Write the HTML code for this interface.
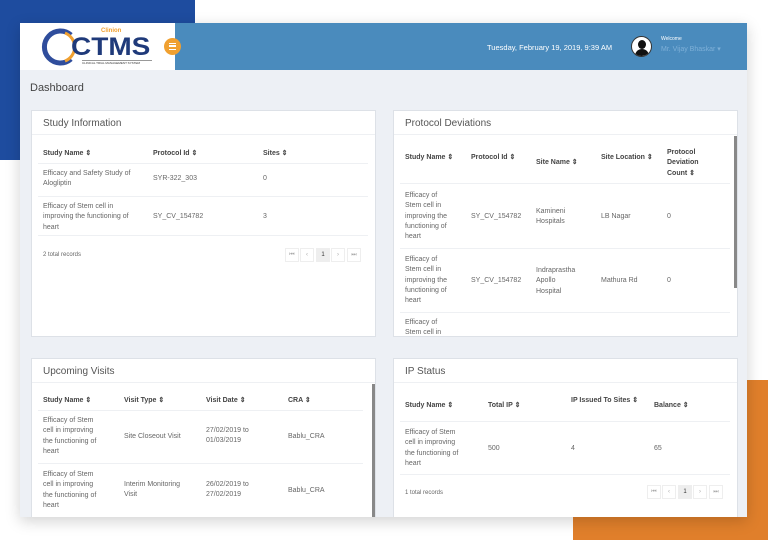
<!DOCTYPE html>
<html><head><meta charset="utf-8"><style>
*{margin:0;padding:0;box-sizing:border-box}
body{width:768px;height:540px;overflow:hidden;background:#fff;position:relative;font-family:"Liberation Sans",sans-serif;color:#555}
.abs{position:absolute}
.app{position:absolute;left:20px;top:23px;width:727px;height:494px;background:#edf0f5;box-shadow:0 4px 14px rgba(0,0,0,.18);overflow:hidden}
.panel{position:absolute;background:#fff;border:1px solid #dde1e7;overflow:hidden}
.ptitle{position:absolute;left:11px;top:7px;font-size:10px;color:#555}
.t{position:absolute;font-size:7px;line-height:10.3px;color:#666}
.h{position:absolute;font-size:7px;line-height:10.3px;color:#444;font-weight:bold}
.line{position:absolute;height:1px;background:#eef0f3}
.pg{position:absolute;width:14px;height:14px;border:1px solid #eee;font-size:6px;color:#aaa;text-align:center;line-height:12px}
.scroll{position:absolute;width:3px;background:#888}
</style></head><body>
<div class="abs" style="left:0;top:0;width:195px;height:160px;background:#1e4c9f"></div>
<div class="abs" style="left:573px;top:380px;width:195px;height:160px;background:#e07f2b"></div>
<div class="app">
 <div class="abs" style="left:0;top:0;width:155px;height:47px;background:#fff"></div>
 <div class="abs" style="left:155px;top:0;width:572px;height:47px;background:#4a8bbd"></div>
 <svg class="abs" style="left:21px;top:4px" width="40" height="40"><path d="M30 8 A16 16 0 1 0 30 32" fill="none" stroke="#2f4d9c" stroke-width="5"/><path d="M24 6 A15 15 0 0 1 24 34" fill="none" stroke="#f0a030" stroke-width="3"/></svg>
 <div class="abs" style="left:51px;top:10px;font-size:25px;font-weight:bold;color:#1f3a7a;transform:scaleX(1.12);transform-origin:left top">CTMS</div>
 <div class="abs" style="left:81px;top:5px;font-size:6px;color:#f0a030;font-weight:bold">Clinion</div>
 <div class="abs" style="left:62px;top:37px;font-size:3px;color:#333;border-top:1px solid #999;width:70px">CLINICAL TRIAL MANAGEMENT SYSTEM</div>
 <div class="abs" style="left:144px;top:15px;width:17px;height:17px;border-radius:50%;background:#f0a030"><div style="margin:5px 5px;width:7px;height:7px;border-top:1.5px solid #fff;border-bottom:1.5px solid #fff;position:relative"><div style="position:absolute;top:1.3px;left:0;width:7px;height:1.5px;background:#fff"></div></div></div>
 <div class="abs" style="left:467px;top:20px;font-size:7.5px;color:#fff">Tuesday, February 19, 2019, 9:39 AM</div>
 <div class="abs" style="left:611px;top:13px;width:21px;height:21px;border-radius:50%;background:#fff;border:1px solid #333;overflow:hidden"><div style="position:absolute;left:6px;top:3px;width:8px;height:9px;border-radius:50%;background:#111"></div><div style="position:absolute;left:3px;top:12px;width:14px;height:10px;border-radius:7px 7px 0 0;background:#111"></div></div>
 <div class="abs" style="left:641px;top:13px;font-size:5px;color:#fff">Welcome</div>
 <div class="abs" style="left:641px;top:22px;font-size:7px;color:#7eb0d8">Mr. Vijay Bhaskar ▾</div>
 <div class="abs" style="left:10px;top:59px;font-size:11px;color:#444">Dashboard</div>

 <div class="panel" style="left:11px;top:87px;width:345px;height:227px">
  <div class="ptitle">Study Information</div><div class="line" style="left:0;top:23px;width:345px"></div>
  <div class="h" style="left:11px;top:38px">Study Name ⇕</div><div class="h" style="left:121px;top:38px">Protocol Id ⇕</div><div class="h" style="left:231px;top:38px">Sites ⇕</div>
  <div class="line" style="left:6px;top:52px;width:330px"></div>
  <div class="t" style="left:11px;top:58px;width:105px">Efficacy and Safety Study of Alogliptin</div><div class="t" style="left:121px;top:63px">SYR-322_303</div><div class="t" style="left:231px;top:63px">0</div>
  <div class="line" style="left:6px;top:85px;width:330px"></div>
  <div class="t" style="left:11px;top:91px;width:100px">Efficacy of Stem cell in improving the functioning of heart</div><div class="t" style="left:121px;top:101px">SY_CV_154782</div><div class="t" style="left:231px;top:101px">3</div>
  <div class="line" style="left:6px;top:124px;width:330px"></div>
  <div class="t" style="left:11px;top:139px;font-size:6px">2 total records</div>
  <div class="pg" style="left:253px;top:137px">⏮</div><div class="pg" style="left:268px;top:137px">‹</div><div class="pg" style="left:284px;top:137px;background:#eee;color:#333">1</div><div class="pg" style="left:299px;top:137px">›</div><div class="pg" style="left:315px;top:137px">⏭</div>
 </div>

 <div class="panel" style="left:373px;top:87px;width:345px;height:227px">
  <div class="ptitle">Protocol Deviations</div><div class="line" style="left:0;top:23px;width:345px"></div>
  <div class="h" style="left:11px;top:42px;width:55px">Study Name ⇕</div><div class="h" style="left:77px;top:42px;width:50px">Protocol Id ⇕</div><div class="h" style="left:142px;top:47px">Site Name ⇕</div><div class="h" style="left:207px;top:42px;width:55px">Site Location ⇕</div><div class="h" style="left:273px;top:37px;width:45px">Protocol Deviation Count ⇕</div>
  <div class="line" style="left:6px;top:72px;width:330px"></div>
  <div class="t" style="left:11px;top:80px;width:50px">Efficacy of Stem cell in improving the functioning of heart</div><div class="t" style="left:77px;top:101px">SY_CV_154782</div><div class="t" style="left:142px;top:96px;width:40px">Kamineni Hospitals</div><div class="t" style="left:207px;top:101px">LB Nagar</div><div class="t" style="left:273px;top:101px">0</div>
  <div class="line" style="left:6px;top:137px;width:330px"></div>
  <div class="t" style="left:11px;top:144px;width:50px">Efficacy of Stem cell in improving the functioning of heart</div><div class="t" style="left:77px;top:165px">SY_CV_154782</div><div class="t" style="left:142px;top:155px;width:45px">Indraprastha Apollo Hospital</div><div class="t" style="left:207px;top:165px">Mathura Rd</div><div class="t" style="left:273px;top:165px">0</div>
  <div class="line" style="left:6px;top:201px;width:330px"></div>
  <div class="t" style="left:11px;top:207px;width:50px">Efficacy of Stem cell in</div>
  <div class="scroll" style="left:340px;top:25px;height:152px"></div>
 </div>

 <div class="panel" style="left:11px;top:335px;width:345px;height:170px">
  <div class="ptitle">Upcoming Visits</div><div class="line" style="left:0;top:23px;width:345px"></div>
  <div class="h" style="left:11px;top:37px">Study Name ⇕</div><div class="h" style="left:92px;top:37px">Visit Type ⇕</div><div class="h" style="left:174px;top:37px">Visit Date ⇕</div><div class="h" style="left:256px;top:37px">CRA ⇕</div>
  <div class="line" style="left:6px;top:51px;width:325px"></div>
  <div class="t" style="left:11px;top:57px;width:58px">Efficacy of Stem cell in improving the functioning of heart</div><div class="t" style="left:92px;top:73px">Site Closeout Visit</div><div class="t" style="left:174px;top:67px;width:60px">27/02/2019 to 01/03/2019</div><div class="t" style="left:256px;top:73px">Bablu_CRA</div>
  <div class="line" style="left:6px;top:104px;width:325px"></div>
  <div class="t" style="left:11px;top:111px;width:58px">Efficacy of Stem cell in improving the functioning of heart</div><div class="t" style="left:92px;top:121px;width:64px">Interim Monitoring Visit</div><div class="t" style="left:174px;top:121px;width:60px">26/02/2019 to 27/02/2019</div><div class="t" style="left:256px;top:127px">Bablu_CRA</div>
  <div class="scroll" style="left:340px;top:25px;height:145px"></div>
 </div>

 <div class="panel" style="left:373px;top:335px;width:345px;height:170px">
  <div class="ptitle">IP Status</div><div class="line" style="left:0;top:23px;width:345px"></div>
  <div class="h" style="left:11px;top:42px">Study Name ⇕</div><div class="h" style="left:94px;top:42px">Total IP ⇕</div><div class="h" style="left:177px;top:37px;width:70px">IP Issued To Sites ⇕</div><div class="h" style="left:260px;top:42px">Balance ⇕</div>
  <div class="line" style="left:6px;top:62px;width:330px"></div>
  <div class="t" style="left:11px;top:69px;width:58px">Efficacy of Stem cell in improving the functioning of heart</div><div class="t" style="left:94px;top:85px">500</div><div class="t" style="left:177px;top:85px">4</div><div class="t" style="left:260px;top:85px">65</div>
  <div class="line" style="left:6px;top:115px;width:330px"></div>
  <div class="t" style="left:11px;top:129px;font-size:6px">1 total records</div>
  <div class="pg" style="left:253px;top:126px">⏮</div><div class="pg" style="left:268px;top:126px">‹</div><div class="pg" style="left:284px;top:126px;background:#eee;color:#333">1</div><div class="pg" style="left:299px;top:126px">›</div><div class="pg" style="left:315px;top:126px">⏭</div>
 </div>
</div>
</body></html>
